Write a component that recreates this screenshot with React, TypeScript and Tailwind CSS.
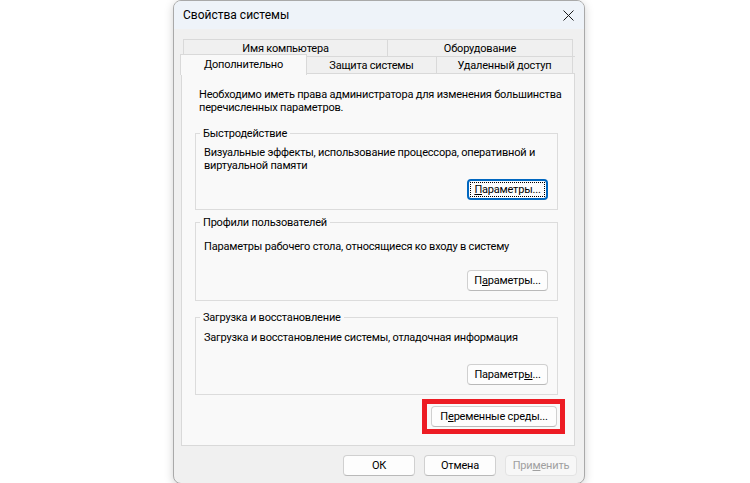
import type { ReactNode } from "react";

function Btn({
  children,
  width,
  focused,
  disabled,
}: {
  children: ReactNode;
  width: string;
  focused?: boolean;
  disabled?: boolean;
}) {
  if (focused) {
    return (
      <div
        className={`${width} h-[21px] rounded-[4px] border-2 border-[#0067c0] bg-[#fdfdfd] p-px`}
      >
        <div className="h-full border border-dotted border-black flex items-center justify-center text-[11px] leading-none text-black">
          {children}
        </div>
      </div>
    );
  }
  return (
    <div
      className={`${width} h-[21px] rounded-[4px] border flex items-center justify-center text-[11px] leading-none ${
        disabled
          ? "border-[#e3e3e3] bg-[#f7f7f7] text-[#a0a0a0]"
          : "border-[#d0d0d0] border-b-[#b9b9b9] bg-[#fdfdfd] text-black"
      }`}
    >
      {children}
    </div>
  );
}

function Group({
  title,
  children,
  button,
  className,
  bodyGap,
}: {
  title: string;
  children: ReactNode;
  button: ReactNode;
  className?: string;
  bodyGap: string;
}) {
  return (
    <fieldset className={`ml-[13px] mr-[16px] border border-[#dcdcdc] pl-[8px] pr-[9px] pb-[9px] ${className ?? ""}`}>
      <legend className="-ml-[4px] px-[3px] text-[11px] leading-[13px] text-black">{title}</legend>
      <div className={`${bodyGap} text-[11px] leading-[13px] text-black whitespace-nowrap`}>{children}</div>
      <div className="flex justify-end">{button}</div>
    </fieldset>
  );
}

export default function App() {
  return (
    <div className="w-[750px] h-[483px] bg-white overflow-hidden font-['Roboto','Liberation_Sans',sans-serif] tracking-[-0.2px]">
      <div className="ml-[173px] w-[412px] h-[484px] rounded-[8px] border border-[#a9a9a9] bg-[#f0f0f0] shadow-[0_2px_10px_rgba(0,0,0,0.18)] overflow-hidden flex flex-col">
        {/* title bar */}
        <div className="h-[28px] bg-[#eef3f9] flex items-center justify-between pl-[9px] pr-[10px]">
          <span className="text-[12px] text-black tracking-normal">Свойства системы</span>
          <svg width="11" height="11" viewBox="0 0 11 11" className="text-[#1a1a1a]">
            <path d="M0.5 0.5 L10.5 10.5 M10.5 0.5 L0.5 10.5" stroke="currentColor" strokeWidth="1" />
          </svg>
        </div>

        <div className="pl-[7px] pt-[10px]">
          {/* tabs */}
          <div className="w-[394px] text-[11px] leading-none text-black">
            <div className="h-[17px] flex px-[2px]">
              <div className="w-[204px] border-l border-t border-[#d9d9d9] bg-[#f0f0f0] flex items-center justify-center">
                Имя компьютера
              </div>
              <div className="w-[186px] border-l border-t border-r border-[#d9d9d9] bg-[#f0f0f0] flex items-center justify-center">
                Оборудование
              </div>
            </div>
            <div className="h-[17px] flex border-t border-[#d9d9d9] pr-[2px]">
              <div className="relative z-10 -ml-px -mt-[3px] h-[21px] w-[127px] border-l border-t border-r border-[#d9d9d9] bg-[#f9f9f9] flex items-start justify-center pt-[4px]">
                Дополнительно
              </div>
              <div className="w-[130px] border-r border-[#d9d9d9] bg-[#f0f0f0] flex items-center justify-center">
                Защита системы
              </div>
              <div className="flex-1 border-r border-[#d9d9d9] bg-[#f0f0f0] flex items-center justify-center">
                Удаленный доступ
              </div>
            </div>

            {/* panel */}
            <div className="h-[373px] border border-[#d9d9d9] bg-[#f9f9f9] flex flex-col">
              <p className="pl-[17px] pt-[14px] text-[11px] leading-[13px] whitespace-nowrap">
                Необходимо иметь права администратора для изменения большинства
                <br />
                перечисленных параметров.
              </p>

              <Group
                className="mt-[13px]"
                bodyGap="mt-[6px]"
                title="Быстродействие"
                button={
                  <Btn width="w-[81px]" focused>
                    <span>
                      <u>П</u>араметры...
                    </span>
                  </Btn>
                }
              >
                <div className="mb-[7px]">
                  Визуальные эффекты, использование процессора, оперативной и
                  <br />
                  виртуальной памяти
                </div>
              </Group>

              <Group
                className="mt-[6px]"
                bodyGap="mt-[11px]"
                title="Профили пользователей"
                button={
                  <Btn width="w-[81px]">
                    <span>
                      П<u>а</u>раметры...
                    </span>
                  </Btn>
                }
              >
                <div className="mb-[17px]">Параметры рабочего стола, относящиеся ко входу в систему</div>
              </Group>

              <Group
                className="mt-[10px]"
                bodyGap="mt-[7px]"
                title="Загрузка и восстановление"
                button={
                  <Btn width="w-[81px]">
                    <span>
                      Параметр<u>ы</u>...
                    </span>
                  </Btn>
                }
              >
                <div className="mb-[20px]">Загрузка и восстановление системы, отладочная информация</div>
              </Group>

              <div className="flex justify-end mt-[4px] pr-[9px]">
                <div className="border-[5px] border-[#ed1c24] pl-[4px] pr-[3px] py-[2px]">
                  <Btn width="w-[126px]">
                    <span>
                      П<u>е</u>ременные среды...
                    </span>
                  </Btn>
                </div>
              </div>
            </div>
          </div>
        </div>

        {/* bottom buttons */}
        <div className="flex justify-end gap-[9px] pr-[7px] mt-[9px]">
          <Btn width="w-[72px]">ОК</Btn>
          <Btn width="w-[72px]">Отмена</Btn>
          <Btn width="w-[72px]" disabled>
            <span>
              При<u>м</u>енить
            </span>
          </Btn>
        </div>
      </div>
    </div>
  );
}
